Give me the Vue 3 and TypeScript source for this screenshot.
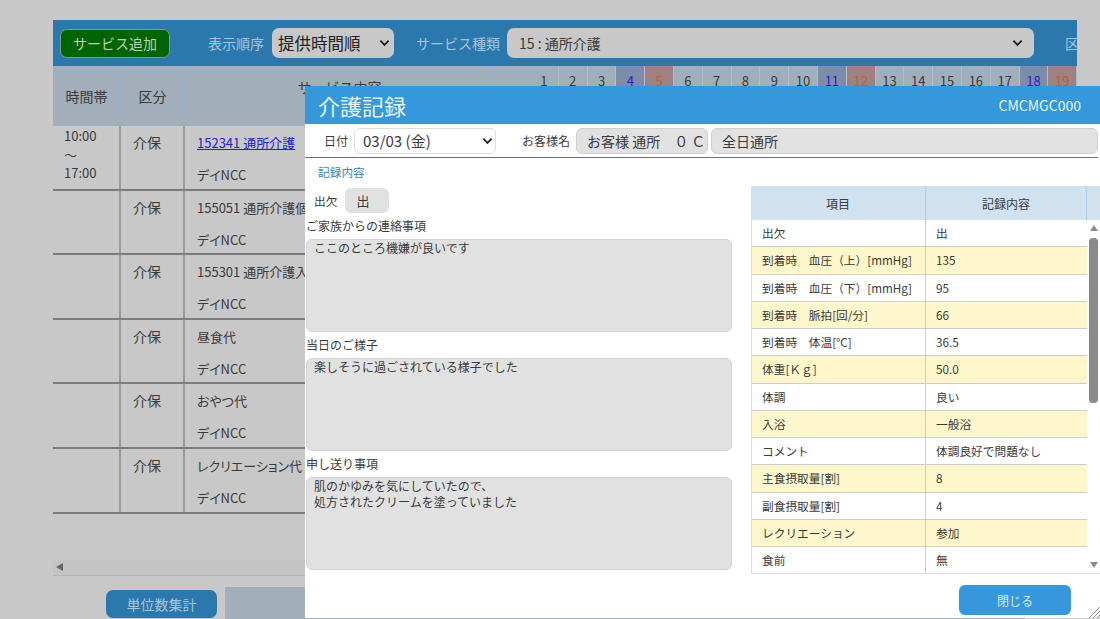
<script setup lang="ts">
const bgRows = [
  { time: ['10:00', '～', '17:00'], kubun: '介保', name: '152341 通所介護', link: true },
  { time: [], kubun: '介保', name: '155051 通所介護個', link: false },
  { time: [], kubun: '介保', name: '155301 通所介護入', link: false },
  { time: [], kubun: '介保', name: '昼食代', link: false },
  { time: [], kubun: '介保', name: 'おやつ代', link: false },
  { time: [], kubun: '介保', name: 'レクリエーション代', link: false },
]
const days = Array.from({ length: 19 }, (_, i) => i + 1)
const dayClass = (d: number) => (d % 7 === 4 ? 'sat' : d % 7 === 5 ? 'sun' : '')
const records: [string, string][] = [
  ['出欠', '出'],
  ['到着時　血圧（上）[mmHg]', '135'],
  ['到着時　血圧（下）[mmHg]', '95'],
  ['到着時　脈拍[回/分]', '66'],
  ['到着時　体温[℃]', '36.5'],
  ['体重[Ｋｇ]', '50.0'],
  ['体調', '良い'],
  ['入浴', '一般浴'],
  ['コメント', '体調良好で問題なし'],
  ['主食摂取量[割]', '8'],
  ['副食摂取量[割]', '4'],
  ['レクリエーション', '参加'],
  ['食前', '無'],
]
const notes = [
  { label: 'ご家族からの連絡事項', text: 'ここのところ機嫌が良いです' },
  { label: '当日のご様子', text: '楽しそうに過ごされている様子でした' },
  { label: '申し送り事項', text: '肌のかゆみを気にしていたので、\n処方されたクリームを塗っていました' },
]
</script>

<template>
  <div class="page">
    <div class="app">
      <div class="topbar">
        <button class="add">サービス追加</button>
        <span class="tlabel order-label">表示順序</span>
        <div class="sel order"><span>提供時間順</span><svg class="chev" viewBox="0 0 12 8"><path d="M1.5 1.5 6 6l4.5-4.5" /></svg></div>
        <span class="tlabel kind-label">サービス種類</span>
        <div class="sel kind"><span>15 : 通所介護</span><svg class="chev" viewBox="0 0 12 8"><path d="M1.5 1.5 6 6l4.5-4.5" /></svg></div>
        <span class="tlabel ku">区分</span>
      </div>
      <div class="thead">
        <div class="th c-time">時間帯</div>
        <div class="th c-kubun">区分</div>
        <div class="th c-name top">サービス内容</div>
        <div class="th c-x"></div>
        <div v-for="d in days" :key="d" class="day" :class="dayClass(d)">{{ d }}</div>
      </div>
      <div v-for="(r, i) in bgRows" :key="i" class="trow">
        <div class="td c-time times"><div v-for="t in r.time" :key="t">{{ t }}</div></div>
        <div class="td c-kubun">{{ r.kubun }}</div>
        <div class="td c-name names">
          <a v-if="r.link" class="link">{{ r.name }}</a>
          <span v-else>{{ r.name }}</span>
          <span>デイNCC</span>
        </div>
      </div>
      <div class="hscroll"><span class="arrow-left"></span></div>
      <div class="foot">
        <button class="tally">単位数集計</button>
        <div class="footbar"></div>
      </div>
    </div>

    <section class="modal">
      <header class="mhead"><h1>介護記録</h1><span>CMCMGC000</span></header>
      <div class="mrow">
        <span class="mlabel date-label">日付</span>
        <div class="datesel"><span>03/03 (金)</span><svg class="chev" viewBox="0 0 12 8"><path d="M1.5 1.5 6 6l4.5-4.5" /></svg></div>
        <span class="mlabel cust-label">お客様名</span>
        <div class="field f1">お客様 通所　０ Ｃ</div>
        <div class="field f2">全日通所</div>
      </div>
      <div class="section">記録内容</div>
      <div class="mbody">
        <div class="left">
          <div class="attend"><span>出欠</span><div class="abox">出</div></div>
          <div v-for="n in notes" :key="n.label" class="note">
            <label>{{ n.label }}</label>
            <div class="area">{{ n.text }}</div>
          </div>
        </div>
        <div class="right">
          <div class="rhead">
            <div class="rc1">項目</div>
            <div class="rc2">記録内容</div>
            <div class="rc3"></div>
          </div>
          <div class="rscroll">
            <div class="rlist">
              <div v-for="(r, i) in records" :key="r[0]" class="rrow" :class="{ odd: i % 2 === 1 }">
                <div class="rc1">{{ r[0] }}</div>
                <div class="rc2">{{ r[1] }}</div>
              </div>
            </div>
            <div class="vbar">
              <span class="up"></span>
              <div class="track"><div class="thumb"></div></div>
              <span class="down"></span>
            </div>
          </div>
        </div>
      </div>
      <div class="mfoot"><button class="close">閉じる</button></div>
      <svg class="grip" viewBox="0 0 12 12"><path d="M12 1 1 12M12 5 5 12M12 9 9 12" /></svg>
    </section>
  </div>
</template>

<style>
body { margin: 0; }
</style>

<style scoped>
.page {
  position: relative;
  width: 1100px;
  height: 619px;
  overflow: hidden;
  background: #c8c8c8;
  color: #3a3a3a;
  font-family: "Noto Sans CJK JP", "Noto Sans", sans-serif;
  font-size: 13px;
  padding: 20px 0 0 53px;
  box-sizing: border-box;
}
.app { width: 1024px; overflow: hidden; }
.topbar {
  height: 46px;
  background: #2a78ad;
  display: flex;
  align-items: center;
  box-sizing: border-box;
  padding-left: 7px;
}
.topbar > * { flex: none; }
.add {
  width: 110px;
  height: 29px;
  background: #006400;
  border: 1px solid #7f9a7f;
  border-radius: 7px;
  color: #b9d3b9;
  font: inherit;
  font-size: 14px;
  padding: 0;
}
.tlabel { color: #a6c4da; white-space: nowrap; font-size: 14px; }
.order-label { margin-left: 38px; }
.sel {
  background: #c8c8c8;
  border-radius: 7px;
  height: 30px;
  display: flex;
  align-items: center;
  justify-content: space-between;
  box-sizing: border-box;
}
.order { width: 122px; margin-left: 8px; padding: 0 4px 0 6px; font-size: 16.5px; color: #222; }
.kind-label { margin-left: 22px; }
.kind { width: 527px; margin-left: 7px; padding: 0 11px 0 12px; font-size: 14px; }
.ku { margin-left: 31px; }
.chev { width: 11px; height: 8px; flex: none; }
.chev path { fill: none; stroke: #222; stroke-width: 2; }
.thead { display: flex; height: 60px; background: #a2afba; }
.th {
  box-sizing: border-box;
  display: flex;
  align-items: center;
  justify-content: center;
  border-right: 1px solid #9bb0c4;
  font-size: 14px;
}
.top { align-items: flex-start; padding-top: 11px; }
.c-time { width: 68px; flex: none; }
.c-kubun { width: 64px; flex: none; }
.c-name { width: 310px; flex: none; }
.c-x { width: 35px; flex: none; }
.day {
  width: 28.8px;
  flex: none;
  box-sizing: border-box;
  text-align: center;
  padding-top: 5px;
  border-right: 1px solid #b0bcc6;
  color: #3a3a3a;
  font-size: 13px;
}
.day.sat { background: #7e8cab; color: #2424c8; }
.day.sun { background: #a08080; color: #b4652e; }
.trow {
  display: flex;
  height: 64.6px;
  box-sizing: border-box;
  border-bottom: 2px solid #7d7d7d;
}
.td {
  box-sizing: border-box;
  border-right: 2px solid #9c9c9c;
  padding: 6px 12px 0;
  white-space: nowrap;
  font-size: 14px;
}
.times { padding: 1px 11px 0; line-height: 18.5px; font-size: 13px; }
.names {
  display: flex;
  flex-direction: column;
  gap: 13px;
  padding-top: 7px;
  border-right: none;
  font-size: 13px;
  font-feature-settings: "palt";
}
.link { color: #2222cc; text-decoration: underline; }
.hscroll {
  margin-top: 46px;
  height: 15px;
  border-bottom: 1px solid #b4b4b4;
  background: #c4c4c4;
  display: flex;
  align-items: center;
  padding-left: 3px;
}
.arrow-left {
  width: 0;
  height: 0;
  border-top: 4px solid transparent;
  border-bottom: 4px solid transparent;
  border-right: 7px solid #666;
}
.foot { display: flex; margin-top: 11px; align-items: flex-start; padding-left: 53px; }
.tally {
  width: 111px;
  height: 28px;
  margin-top: 3px;
  background: #2a78ad;
  border: none;
  border-radius: 7px;
  color: #a6c4da;
  font: inherit;
  font-size: 14px;
  flex: none;
}
.footbar { margin-left: 8px; width: 800px; height: 34px; background: #a2afba; flex: none; }

.modal {
  position: absolute;
  left: 305px;
  top: 86px;
  width: 795px;
  height: 532px;
  background: #fff;
  display: flex;
  flex-direction: column;
}
.mhead {
  height: 38px;
  flex: none;
  background: #3498db;
  color: #e8f3fb;
  display: flex;
  align-items: center;
  justify-content: space-between;
  padding: 0 19px 0 13px;
}
.mhead h1 { margin: 0; font-size: 22px; font-weight: 400; }
.mhead span { font-size: 14px; }
.mrow {
  height: 34px;
  flex: none;
  display: flex;
  align-items: center;
  border-bottom: 1px solid #3a7cc0;
  box-sizing: border-box;
  font-size: 12px;
  margin-right: 2px;
}
.mlabel { white-space: nowrap; }
.date-label { margin-left: 19px; }
.datesel {
  width: 142px;
  height: 26px;
  margin-left: 6px;
  border: 1px solid #ddd;
  border-radius: 6px;
  box-sizing: border-box;
  display: flex;
  align-items: center;
  justify-content: space-between;
  padding: 0 2px 0 8px;
  font-size: 15px;
}
.cust-label { margin-left: 26px; }
.field {
  height: 26px;
  background: #e1e1e1;
  border: 1px solid #d0d0d0;
  border-radius: 6px;
  box-sizing: border-box;
  display: flex;
  align-items: center;
  padding-left: 10px;
  font-size: 14px;
  white-space: nowrap;
  overflow: hidden;
}
.f1 { width: 132px; margin-left: 6px; }
.f2 { width: 387px; margin-left: 3px; }
.section {
  flex: none;
  height: 28px;
  padding-left: 13px;
  font-size: 11.7px;
  color: #3a7fb5;
  line-height: 28px;
}
.mbody { display: flex; flex: 1; min-height: 0; }
.left { width: 426px; margin-left: 1px; flex: none; }
.attend { display: flex; align-items: center; height: 25px; margin-top: 2px; font-size: 11.7px; padding-left: 8px; }
.abox {
  margin-left: 8px;
  width: 44px;
  height: 25px;
  background: #e1e1e1;
  border-radius: 6px;
  box-sizing: border-box;
  padding-left: 11px;
  line-height: 25px;
  font-size: 13px;
}
.note { display: flex; flex-direction: column; }
.note label { height: 26px; line-height: 26px; font-size: 12px; white-space: nowrap; }
.area {
  height: 93px;
  background: #e1e1e1;
  border: 1px solid #d4d4d4;
  border-radius: 6px;
  box-sizing: border-box;
  padding: 0 7px;
  font-size: 12px;
  line-height: 16px;
  white-space: pre-wrap;
}
.right { margin-left: 19px; width: 349px; flex: none; }
.rhead { display: flex; height: 34px; background: #d0e2f0; font-size: 12px; }
.rhead > div {
  display: flex;
  align-items: center;
  justify-content: center;
  border-right: 1px solid #a9cbe4;
  box-sizing: border-box;
}
.rc1 { width: 175px; flex: none; box-sizing: border-box; }
.rc2 { width: 161px; flex: none; box-sizing: border-box; }
.rc3 { flex: 1; border-right: none !important; }
.rscroll { display: flex; height: 354px; border-bottom: 1px solid #ddd; border-left: 1px solid #ddd; box-sizing: border-box; }
.rlist { width: 335px; flex: none; overflow: hidden; }
.rrow {
  display: flex;
  height: 27.25px;
  box-sizing: border-box;
  border-bottom: 1px solid #ccc;
  font-size: 11.7px;
  line-height: 26px;
}
.rrow:last-child { border-bottom: none; }
.rrow.odd { background: #fff7cc; }
.rrow .rc1 { border-right: 1px solid #ccc; padding-left: 10px; width: 174px; white-space: nowrap; overflow: hidden; }
.rrow .rc2 { padding-left: 10px; }
.vbar { flex: 1; display: flex; flex-direction: column; align-items: center; }
.up, .down { width: 0; height: 0; border-left: 4px solid transparent; border-right: 4px solid transparent; flex: none; }
.up { border-bottom: 6px solid #8a8a8a; margin-top: 5px; }
.down { border-top: 6px solid #8a8a8a; margin-bottom: 5px; }
.track { flex: 1; width: 100%; display: flex; justify-content: center; padding-top: 7px; }
.thumb { width: 9px; height: 165px; background: #8a8a8a; border-radius: 4px; }
.mfoot { flex: none; height: 44px; display: flex; justify-content: flex-end; padding-right: 29px; align-items: flex-start; padding-top: 11px; box-sizing: border-box; }
.close {
  width: 112px;
  height: 30px;
  background: #3498db;
  border: none;
  border-radius: 6px;
  color: #d8ebf8;
  font: inherit;
  font-size: 12px;
}
.grip { position: absolute; right: 0; bottom: 0; width: 12px; height: 12px; }
.grip path { fill: none; stroke: #888; stroke-width: 1; }
</style>
